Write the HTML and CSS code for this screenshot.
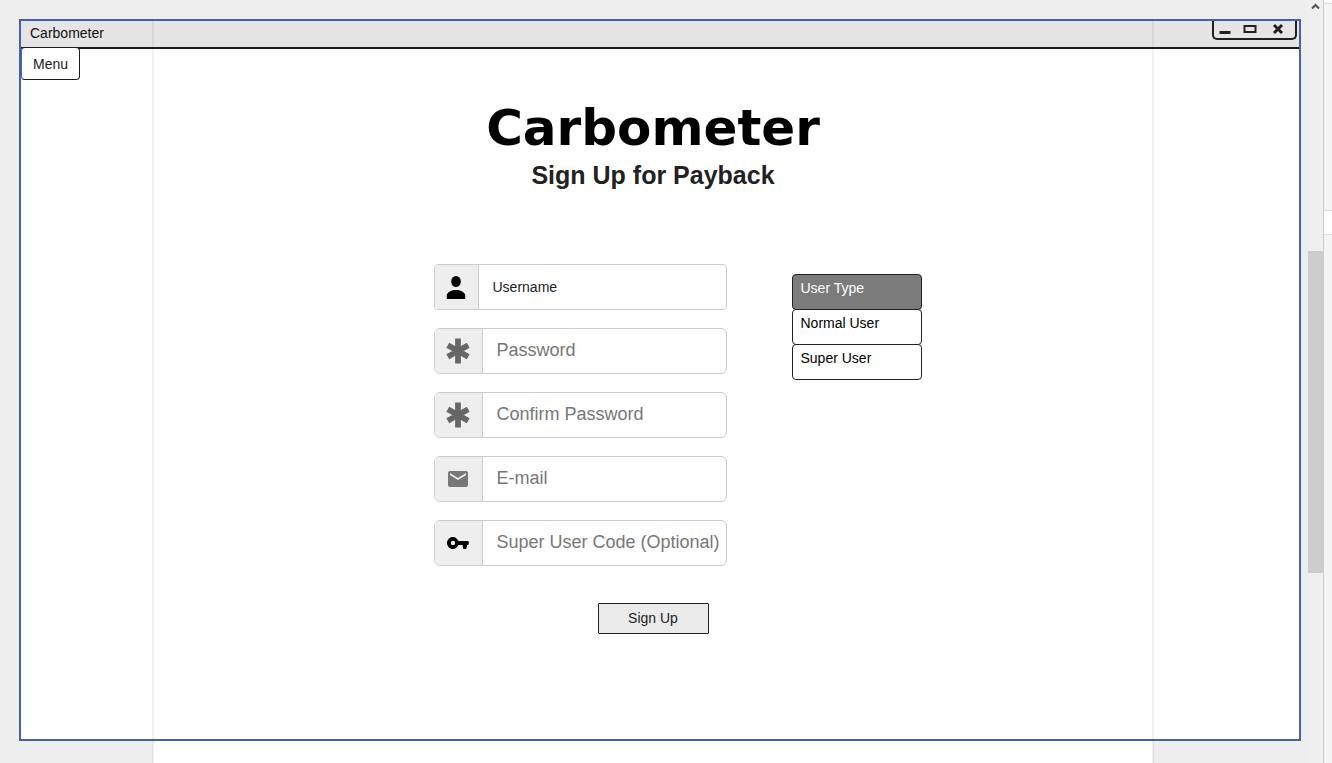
FILE: index.html
```html
<!DOCTYPE html>
<html lang="en">
<head>
<meta charset="utf-8">
<title>Carbometer</title>
<link rel="stylesheet" href="styles.css">
</head>
<body>
<div class="workspace">
  <div class="window">
    <header class="titlebar">
      <span class="titlebar-name">Carbometer</span>
      <div class="window-controls">
        <button type="button" aria-label="Minimize"><svg width="12" height="12" viewBox="0 0 12 12"><path d="M0.500 8h11v3h-11z" fill="#231f20"/></svg></button>
        <button type="button" aria-label="Maximize"><svg width="14" height="12" viewBox="0 0 14 12"><path d="M1.500 3h11v6h-11z" fill="none" stroke="#231f20" stroke-width="2"/></svg></button>
        <button type="button" aria-label="Close"><svg width="12" height="12" viewBox="0 0 12 12"><path d="M2 2l8 8M10 2l-8 8" fill="none" stroke="#231f20" stroke-width="3"/></svg></button>
      </div>
    </header>
    <button class="menu" type="button">Menu</button>
    <main class="content">
      <h1 class="brand">Carbometer</h1>
      <h2 class="subtitle">Sign Up for Payback</h2>
      <form class="signup">
        <div class="columns">
          <div class="fields">
            <div class="field field-compact">
              <label class="addon" for="username" aria-label="Username"><svg width="20" height="24" viewBox="0 0 20 24"><ellipse cx="10" cy="6.500" rx="4.800" ry="5.500"/><path d="M.8 24v-3.500C.8 17 6 15 10 15s9.200 2 9.200 5.500V24z"/></svg></label>
              <input id="username" type="text" placeholder="Username">
            </div>
            <div class="field">
              <label class="addon" for="password" aria-label="Password"><svg width="26" height="28" viewBox="0 0 26 28"><path d="M13 1.500V26.500M2.800 8.200L23.200 19.800M23.200 8.200L2.800 19.800" fill="none" stroke="#666" stroke-width="5.800"/></svg></label>
              <input id="password" type="password" placeholder="Password">
            </div>
            <div class="field">
              <label class="addon" for="confirm" aria-label="Confirm Password"><svg width="26" height="28" viewBox="0 0 26 28"><path d="M13 1.500V26.500M2.800 8.200L23.200 19.800M23.200 8.200L2.800 19.800" fill="none" stroke="#666" stroke-width="5.800"/></svg></label>
              <input id="confirm" type="password" placeholder="Confirm Password">
            </div>
            <div class="field">
              <label class="addon" for="email" aria-label="E-mail"><svg width="24" height="24" viewBox="0 0 24 24"><path fill="#777" d="M20 4H4c-1.100 0-2 .9-2 2v12c0 1.100.9 2 2 2h16c1.100 0 2-.9 2-2V6c0-1.100-.9-2-2-2zm0 4l-8 5-8-5V6l8 5 8-5v2z"/></svg></label>
              <input id="email" type="email" placeholder="E-mail">
            </div>
            <div class="field">
              <label class="addon" for="code" aria-label="Super User Code"><svg width="24" height="24" viewBox="0 0 24 24"><path fill-rule="evenodd" d="M12.300 10C11.500 7.700 9.400 6 7 6c-3.300 0-6 2.700-6 6s2.700 6 6 6c2.400 0 4.500-1.700 5.300-4H16.500l.8 4h3l.7-4h1.200l.8-2.500-1-1.500zM7 14.200a2.200 2.200 0 1 1 0-4.400 2.200 2.200 0 0 1 0 4.400z"/></svg></label>
              <input id="code" type="text" placeholder="Super User Code (Optional)">
            </div>
          </div>
          <div class="user-type">
            <button class="option selected" type="button">User Type</button>
            <button class="option" type="button">Normal User</button>
            <button class="option" type="button">Super User</button>
          </div>
        </div>
        <button class="submit" type="submit">Sign Up</button>
      </form>
    </main>
  </div>
  <div class="sheet"></div>
  <div class="guides"></div>
</div>
<div class="scrollbar">
  <svg width="15" height="12" viewBox="0 0 15 12"><path d="M4 8.500l3.500-3.500 3.500 3.500" fill="none" stroke="#505050" stroke-width="2"/></svg>
  <div class="thumb"></div>
</div>
<aside class="side-panel"><div class="side-gap"></div></aside>
</body>
</html>
```

FILE: styles.css
```css
* {
  box-sizing: border-box;
}

body {
  margin: 0;
  min-height: 100vh;
  display: grid;
  grid-template-columns: 1fr 15px 9px;
  background: #eee;
  color: #222;
  font: 14px/16px "Liberation Sans", Arial, sans-serif;
}

button,
input {
  font: inherit;
  color: inherit;
}

.workspace {
  position: relative;
  display: grid;
  grid-template-rows: 1fr 22px;
  padding: 19px 7px 0 19px;
}

.window {
  display: flex;
  flex-direction: column;
  align-items: stretch;
  border: 2px solid #4561ad;
  background: #fff;
}

.titlebar {
  display: flex;
  justify-content: space-between;
  align-items: flex-start;
  height: 28px;
  padding: 0 2px 0 9px;
  border-bottom: 2px solid #1b1b1b;
  background: #e5e5e5;
}

.titlebar-name {
  padding-top: 4px;
  color: #111;
}

.window-controls {
  display: flex;
  align-items: center;
  justify-content: space-between;
  width: 85px;
  height: 19px;
  padding: 0 11px 2px 5px;
  border: 2px solid #231f20;
  border-top: 0;
  border-radius: 0 0 5px 5px;
}

.window-controls button {
  display: flex;
  padding: 0;
  border: 0;
  background: none;
}

.window-controls button:last-child {
  margin-left: 4px;
}

.menu {
  align-self: flex-start;
  height: 33px;
  margin-top: -2px;
  padding: 0 11px;
  border: 1px solid #1b1b1b;
  border-left-color: #4561ad;
  border-radius: 4px;
  background: #fff;
}

.content {
  display: flex;
  flex-direction: column;
  align-items: center;
  padding: 16px 14px 0 0;
}

.brand {
  margin: 0;
  color: #000;
  font: bold 50px/64px "DejaVu Sans", sans-serif;
}

.subtitle {
  margin: 0;
  font-size: 25px;
  line-height: 30px;
}

.signup {
  display: flex;
  flex-direction: column;
  align-items: center;
  padding-top: 74px;
}

.columns {
  display: flex;
  gap: 65px;
  align-items: flex-start;
  margin-left: 49px;
}

.fields {
  display: grid;
  gap: 18px;
  width: 293px;
}

.field {
  display: flex;
  height: 46px;
  border: 1px solid #ccc;
  border-radius: 6px;
  overflow: hidden;
  background: #fff;
  font-size: 18px;
}

.addon {
  display: flex;
  align-items: center;
  justify-content: center;
  flex: 0 0 48px;
  border-right: 1px solid #ccc;
  background: #eee;
}

.field input {
  flex: 1;
  min-width: 0;
  padding: 0 0 2px 14px;
  border: 0;
  outline: 0;
  background: none;
}

.field input::placeholder {
  color: #777;
  opacity: 1;
}

.field-compact {
  border-radius: 4px;
  font-size: 14px;
}

.field-compact .addon {
  flex-basis: 44px;
}

.field-compact input {
  padding-bottom: 0;
}

.field-compact input::placeholder {
  color: #222;
}

.user-type {
  display: flex;
  flex-direction: column;
  width: 130px;
  padding-top: 10px;
}

.option {
  height: 36px;
  margin-bottom: -1px;
  padding: 0 8px 8px;
  border: 1px solid #222;
  border-radius: 4px;
  background: #fff;
  color: #000;
  text-align: left;
}

.option.selected {
  background: #7b7b7b;
  color: #fff;
}

.submit {
  width: 111px;
  height: 31px;
  margin-top: 37px;
  padding: 0 0 1px;
  border: 1px solid #222;
  border-radius: 1px;
  background: #ebebeb;
}

.sheet {
  justify-self: center;
  width: 1000px;
  max-width: 100%;
  margin-right: 14px;
  background: #fff;
}

.guides {
  position: absolute;
  top: 21px;
  bottom: 0;
  left: 50%;
  width: 1002px;
  margin-left: -502px;
  border: solid rgba(0, 0, 0, 0.06);
  border-width: 0 2px;
  pointer-events: none;
}

.scrollbar {
  display: flex;
  flex-direction: column;
  background: #efefef;
}

.thumb {
  height: 322px;
  margin-top: 239px;
  background: #cdcdcd;
}

.side-panel {
  padding-top: 210px;
  border-left: 1px solid #ccc;
  background: linear-gradient(#fff 3px, #ddd 3px, #ddd 4px, #f4f4f4 4px);
}

.side-gap {
  height: 25px;
  border: solid #ddd;
  border-width: 1px 0;
  background: #fff;
}
```
